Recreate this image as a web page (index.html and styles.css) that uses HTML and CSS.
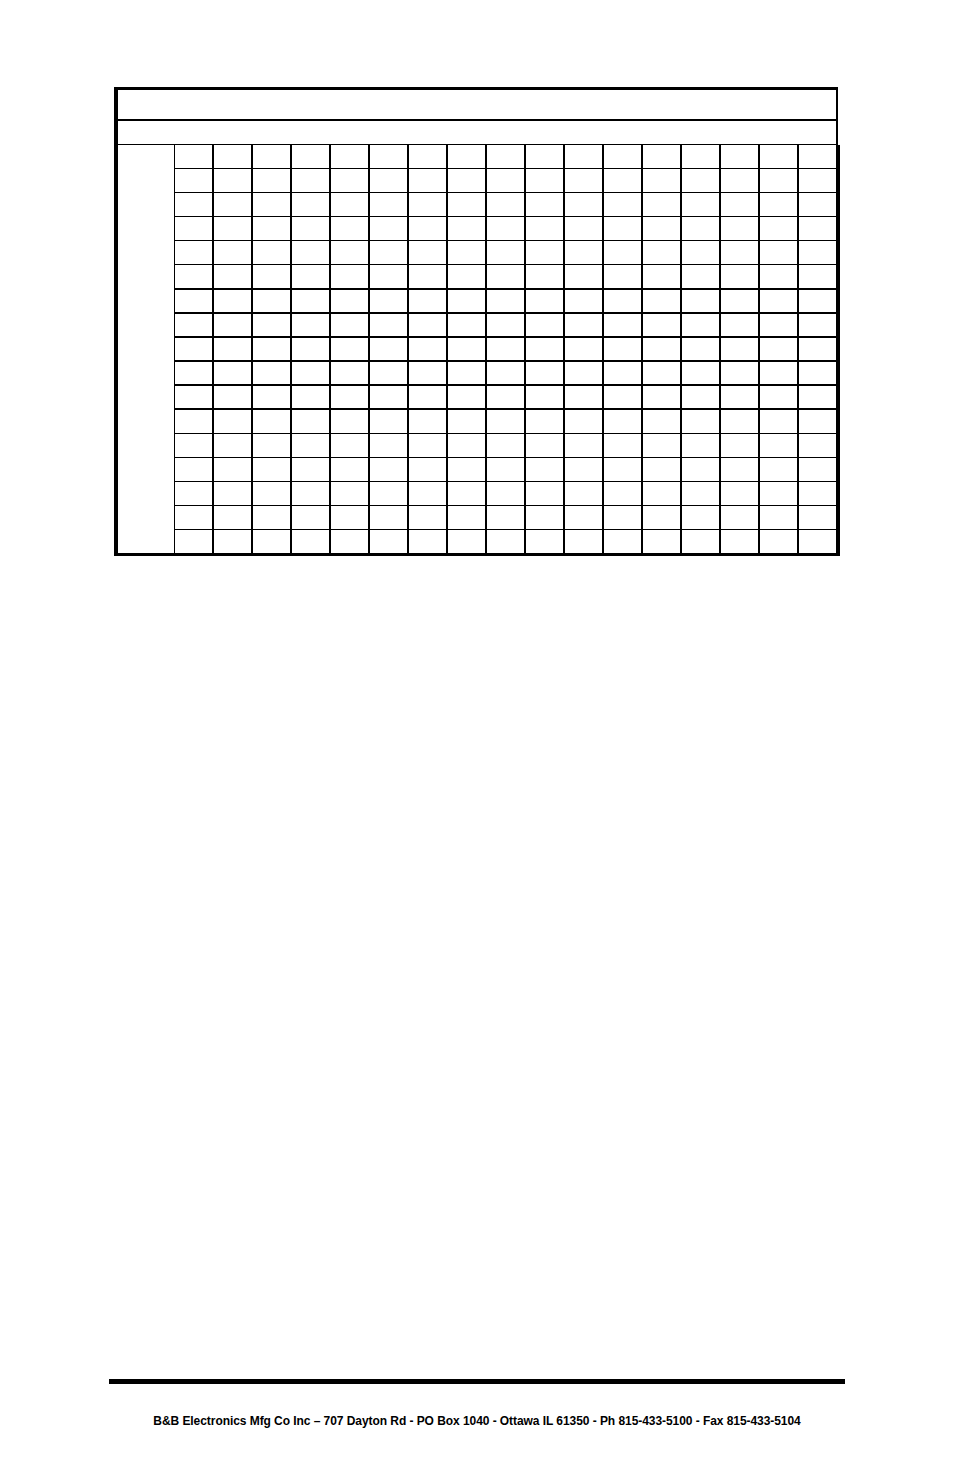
FILE: index.html
```html
<!DOCTYPE html>
<html>
<head>
<meta charset="utf-8">
<title>Sheet</title>
<link rel="stylesheet" href="styles.css">
</head>
<body>
<div class="page">
  <div class="sheet">
    <div class="head">
      <div class="head-row title"></div>
      <div class="head-row sub"></div>
    </div>
    <div class="body">
      <div class="label"></div>
      <div class="grid">
        <div class="c"></div><div class="c"></div><div class="c"></div><div class="c"></div><div class="c"></div><div class="c"></div><div class="c"></div><div class="c"></div><div class="c"></div><div class="c"></div><div class="c"></div><div class="c"></div><div class="c"></div><div class="c"></div><div class="c"></div><div class="c"></div><div class="c"></div>
        <div class="c"></div><div class="c"></div><div class="c"></div><div class="c"></div><div class="c"></div><div class="c"></div><div class="c"></div><div class="c"></div><div class="c"></div><div class="c"></div><div class="c"></div><div class="c"></div><div class="c"></div><div class="c"></div><div class="c"></div><div class="c"></div><div class="c"></div>
        <div class="c"></div><div class="c"></div><div class="c"></div><div class="c"></div><div class="c"></div><div class="c"></div><div class="c"></div><div class="c"></div><div class="c"></div><div class="c"></div><div class="c"></div><div class="c"></div><div class="c"></div><div class="c"></div><div class="c"></div><div class="c"></div><div class="c"></div>
        <div class="c"></div><div class="c"></div><div class="c"></div><div class="c"></div><div class="c"></div><div class="c"></div><div class="c"></div><div class="c"></div><div class="c"></div><div class="c"></div><div class="c"></div><div class="c"></div><div class="c"></div><div class="c"></div><div class="c"></div><div class="c"></div><div class="c"></div>
        <div class="c"></div><div class="c"></div><div class="c"></div><div class="c"></div><div class="c"></div><div class="c"></div><div class="c"></div><div class="c"></div><div class="c"></div><div class="c"></div><div class="c"></div><div class="c"></div><div class="c"></div><div class="c"></div><div class="c"></div><div class="c"></div><div class="c"></div>
        <div class="c"></div><div class="c"></div><div class="c"></div><div class="c"></div><div class="c"></div><div class="c"></div><div class="c"></div><div class="c"></div><div class="c"></div><div class="c"></div><div class="c"></div><div class="c"></div><div class="c"></div><div class="c"></div><div class="c"></div><div class="c"></div><div class="c"></div>
        <div class="c"></div><div class="c"></div><div class="c"></div><div class="c"></div><div class="c"></div><div class="c"></div><div class="c"></div><div class="c"></div><div class="c"></div><div class="c"></div><div class="c"></div><div class="c"></div><div class="c"></div><div class="c"></div><div class="c"></div><div class="c"></div><div class="c"></div>
        <div class="c"></div><div class="c"></div><div class="c"></div><div class="c"></div><div class="c"></div><div class="c"></div><div class="c"></div><div class="c"></div><div class="c"></div><div class="c"></div><div class="c"></div><div class="c"></div><div class="c"></div><div class="c"></div><div class="c"></div><div class="c"></div><div class="c"></div>
        <div class="c"></div><div class="c"></div><div class="c"></div><div class="c"></div><div class="c"></div><div class="c"></div><div class="c"></div><div class="c"></div><div class="c"></div><div class="c"></div><div class="c"></div><div class="c"></div><div class="c"></div><div class="c"></div><div class="c"></div><div class="c"></div><div class="c"></div>
        <div class="c"></div><div class="c"></div><div class="c"></div><div class="c"></div><div class="c"></div><div class="c"></div><div class="c"></div><div class="c"></div><div class="c"></div><div class="c"></div><div class="c"></div><div class="c"></div><div class="c"></div><div class="c"></div><div class="c"></div><div class="c"></div><div class="c"></div>
        <div class="c"></div><div class="c"></div><div class="c"></div><div class="c"></div><div class="c"></div><div class="c"></div><div class="c"></div><div class="c"></div><div class="c"></div><div class="c"></div><div class="c"></div><div class="c"></div><div class="c"></div><div class="c"></div><div class="c"></div><div class="c"></div><div class="c"></div>
        <div class="c"></div><div class="c"></div><div class="c"></div><div class="c"></div><div class="c"></div><div class="c"></div><div class="c"></div><div class="c"></div><div class="c"></div><div class="c"></div><div class="c"></div><div class="c"></div><div class="c"></div><div class="c"></div><div class="c"></div><div class="c"></div><div class="c"></div>
        <div class="c"></div><div class="c"></div><div class="c"></div><div class="c"></div><div class="c"></div><div class="c"></div><div class="c"></div><div class="c"></div><div class="c"></div><div class="c"></div><div class="c"></div><div class="c"></div><div class="c"></div><div class="c"></div><div class="c"></div><div class="c"></div><div class="c"></div>
        <div class="c"></div><div class="c"></div><div class="c"></div><div class="c"></div><div class="c"></div><div class="c"></div><div class="c"></div><div class="c"></div><div class="c"></div><div class="c"></div><div class="c"></div><div class="c"></div><div class="c"></div><div class="c"></div><div class="c"></div><div class="c"></div><div class="c"></div>
        <div class="c"></div><div class="c"></div><div class="c"></div><div class="c"></div><div class="c"></div><div class="c"></div><div class="c"></div><div class="c"></div><div class="c"></div><div class="c"></div><div class="c"></div><div class="c"></div><div class="c"></div><div class="c"></div><div class="c"></div><div class="c"></div><div class="c"></div>
        <div class="c"></div><div class="c"></div><div class="c"></div><div class="c"></div><div class="c"></div><div class="c"></div><div class="c"></div><div class="c"></div><div class="c"></div><div class="c"></div><div class="c"></div><div class="c"></div><div class="c"></div><div class="c"></div><div class="c"></div><div class="c"></div><div class="c"></div>
        <div class="c"></div><div class="c"></div><div class="c"></div><div class="c"></div><div class="c"></div><div class="c"></div><div class="c"></div><div class="c"></div><div class="c"></div><div class="c"></div><div class="c"></div><div class="c"></div><div class="c"></div><div class="c"></div><div class="c"></div><div class="c"></div><div class="c"></div>
      </div>
    </div>
  </div>
  <footer class="footer">
    <div class="rule"></div>
    <p class="address">B&amp;B Electronics Mfg Co Inc – 707 Dayton Rd - PO Box 1040 - Ottawa IL 61350 - Ph 815-433-5100 - Fax 815-433-5104</p>
  </footer>
</div>
</body>
</html>
```
FILE: styles.css
```css
html, body {
  margin: 0;
  padding: 0;
  background: #fff;
}

.page {
  width: 954px;
  height: 1475px;
  overflow: hidden;
  font-family: "Liberation Sans Narrow", "Arial Narrow", "Liberation Sans", Arial, sans-serif;
  color: #000;
}

.sheet {
  margin: 87px 0 0 114px;
  width: 726px;
}

.head {
  width: 724px;
  box-sizing: border-box;
  border-top: 3px solid #000;
  border-left: 4px solid #000;
  border-right: 2px solid #000;
}

.head-row.title {
  height: 29px;
  border-bottom: 2px solid #000;
}

.head-row.sub {
  height: 23px;
  border-bottom: 1px solid #000;
}

.body {
  display: flex;
  height: 411px;
  box-sizing: border-box;
  border-left: 4px solid #000;
  border-right: 4px solid #000;
  border-bottom: 3px solid #000;
}

.label {
  width: 56px;
  flex: none;
  border-right: 1px solid #000;
}

.grid {
  flex: 1;
  display: grid;
  grid-template-columns: repeat(17, 1fr);
  grid-template-rows: repeat(17, 1fr);
  column-gap: 2px;
  row-gap: 1.5px;
  background: #000;
}

.c {
  background: #fff;
}

.footer {
  margin-top: 823px;
}

.rule {
  margin-left: 109px;
  width: 736px;
  height: 5px;
  background: #000;
}

.address {
  margin: 30px 0 0 0;
  text-align: center;
  font-weight: bold;
  font-size: 12px;
  line-height: 14px;
  letter-spacing: -0.06px;
}
```
